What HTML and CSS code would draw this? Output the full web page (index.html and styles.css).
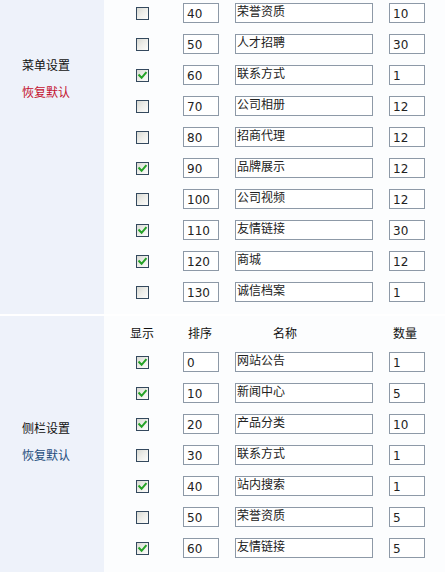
FILE: index.html
```html
<!DOCTYPE html>
<html lang="zh-CN">
<head>
<meta charset="utf-8">
<title>栏目设置</title>
<link rel="stylesheet" href="styles.css">
</head>
<body>
<div class="table">
  <section class="group group-menu">
    <div class="side">
      <div class="side-title">菜单设置</div>
      <a class="side-reset reset-red" href="#">恢复默认</a>
    </div>
    <div class="main">
      <div class="row"><span class="cb"></span><input class="in-num" value="40"><input class="in-name" value="荣誉资质"><input class="in-num" value="10"></div>
      <div class="row"><span class="cb"></span><input class="in-num" value="50"><input class="in-name" value="人才招聘"><input class="in-num" value="30"></div>
      <div class="row"><span class="cb on"><svg viewBox="0 0 11 11"><path d="M2.2 5.2 L4.6 7.8 L8.8 2.8"/></svg></span><input class="in-num" value="60"><input class="in-name" value="联系方式"><input class="in-num" value="1"></div>
      <div class="row"><span class="cb"></span><input class="in-num" value="70"><input class="in-name" value="公司相册"><input class="in-num" value="12"></div>
      <div class="row"><span class="cb"></span><input class="in-num" value="80"><input class="in-name" value="招商代理"><input class="in-num" value="12"></div>
      <div class="row"><span class="cb on"><svg viewBox="0 0 11 11"><path d="M2.2 5.2 L4.6 7.8 L8.8 2.8"/></svg></span><input class="in-num" value="90"><input class="in-name" value="品牌展示"><input class="in-num" value="12"></div>
      <div class="row"><span class="cb"></span><input class="in-num" value="100"><input class="in-name" value="公司视频"><input class="in-num" value="12"></div>
      <div class="row"><span class="cb on"><svg viewBox="0 0 11 11"><path d="M2.2 5.2 L4.6 7.8 L8.8 2.8"/></svg></span><input class="in-num" value="110"><input class="in-name" value="友情链接"><input class="in-num" value="30"></div>
      <div class="row"><span class="cb on"><svg viewBox="0 0 11 11"><path d="M2.2 5.2 L4.6 7.8 L8.8 2.8"/></svg></span><input class="in-num" value="120"><input class="in-name" value="商城"><input class="in-num" value="12"></div>
      <div class="row"><span class="cb"></span><input class="in-num" value="130"><input class="in-name" value="诚信档案"><input class="in-num" value="1"></div>
    </div>
  </section>
  <section class="group group-side">
    <div class="side">
      <div class="side-title">侧栏设置</div>
      <a class="side-reset reset-blue" href="#">恢复默认</a>
    </div>
    <div class="main">
      <div class="row head">
        <span class="h h-show">显示</span><span class="h h-sort">排序</span><span class="h h-name">名称</span><span class="h h-count">数量</span>
      </div>
      <div class="row"><span class="cb on"><svg viewBox="0 0 11 11"><path d="M2.2 5.2 L4.6 7.8 L8.8 2.8"/></svg></span><input class="in-num" value="0"><input class="in-name" value="网站公告"><input class="in-num" value="1"></div>
      <div class="row"><span class="cb on"><svg viewBox="0 0 11 11"><path d="M2.2 5.2 L4.6 7.8 L8.8 2.8"/></svg></span><input class="in-num" value="10"><input class="in-name" value="新闻中心"><input class="in-num" value="5"></div>
      <div class="row"><span class="cb on"><svg viewBox="0 0 11 11"><path d="M2.2 5.2 L4.6 7.8 L8.8 2.8"/></svg></span><input class="in-num" value="20"><input class="in-name" value="产品分类"><input class="in-num" value="10"></div>
      <div class="row"><span class="cb"></span><input class="in-num" value="30"><input class="in-name" value="联系方式"><input class="in-num" value="1"></div>
      <div class="row"><span class="cb on"><svg viewBox="0 0 11 11"><path d="M2.2 5.2 L4.6 7.8 L8.8 2.8"/></svg></span><input class="in-num" value="40"><input class="in-name" value="站内搜索"><input class="in-num" value="1"></div>
      <div class="row"><span class="cb"></span><input class="in-num" value="50"><input class="in-name" value="荣誉资质"><input class="in-num" value="5"></div>
      <div class="row"><span class="cb on"><svg viewBox="0 0 11 11"><path d="M2.2 5.2 L4.6 7.8 L8.8 2.8"/></svg></span><input class="in-num" value="60"><input class="in-name" value="友情链接"><input class="in-num" value="5"></div>
    </div>
  </section>
</div>
</body>
</html>
```

FILE: styles.css
```css
html, body {
  margin: 0;
  padding: 0;
  background: #ffffff;
  font-family: "Noto Sans CJK SC", "DejaVu Sans", sans-serif;
  font-size: 12px;
  color: #000;
  overflow: hidden;
}

.table {
  display: flex;
  flex-direction: column;
  gap: 2px;
  margin-top: -3px;
}

.group {
  display: grid;
  grid-template-columns: 104px 341px;
}

.side {
  background: #eef2fa;
  display: flex;
  flex-direction: column;
  padding-left: 22px;
  line-height: 27px;
}

.group-menu .side { padding-top: 54px; }
.group-side .side { padding-top: 98px; }

.side-title { color: #111; }
.side-reset { text-decoration: none; }
.reset-red { color: #c4122f; }
.reset-blue { color: #234d7c; }

.main {
  background: #fcfdfe;
  display: flex;
  flex-direction: column;
}

.group-menu .main { padding-bottom: 7px; }
.group-side .main { padding-bottom: 12px; }

.row {
  display: grid;
  grid-template-columns: 79px 52px 154px 56px;
  align-items: center;
  height: 31px;
}

.row.head {
  height: 26px;
  padding-top: 4px;
  line-height: 18px;
}

.h { color: #111; }
.h-show { padding-left: 26px; }
.h-sort { padding-left: 5px; }
.h-name { padding-left: 38px; }
.h-count { padding-left: 4px; }

.cb {
  box-sizing: border-box;
  width: 13px;
  height: 13px;
  margin-left: 32px;
  margin-top: 2px;
  border: 1px solid #34495e;
  background: linear-gradient(135deg, #d8d9d3 0%, #eeeeea 50%, #fcfcfb 100%);
  display: flex;
}

.cb svg {
  width: 11px;
  height: 11px;
  fill: none;
  stroke: #24a226;
  stroke-width: 2;
  stroke-linecap: square;
}

input {
  box-sizing: border-box;
  height: 20px;
  margin: 0;
  border: 1px solid #8d99a7;
  background: #fff;
  color: #222;
  outline: none;
}

.in-num {
  width: 36px;
  padding: 2px 0 0 3px;
  font-family: "DejaVu Sans", "Noto Sans CJK SC", sans-serif;
  font-size: 12px;
}

.in-name {
  width: 138px;
  padding: 0 0 4px 1px;
  font-family: "Noto Sans CJK SC", sans-serif;
  font-size: 12px;
}
```
